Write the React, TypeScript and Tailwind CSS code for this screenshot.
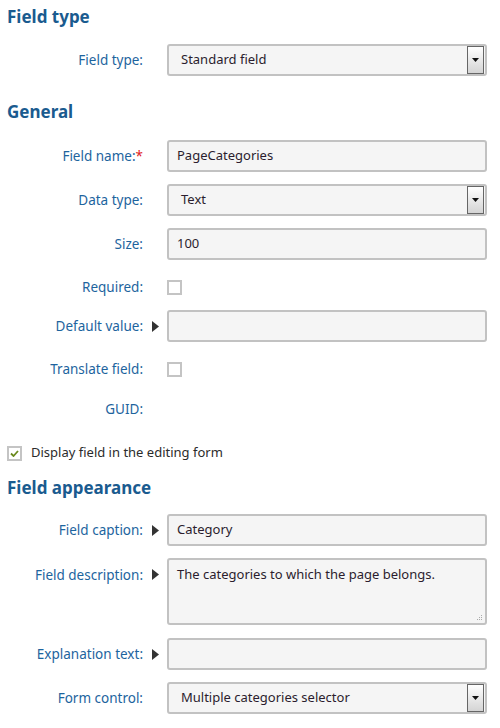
import React from 'react';

const font = { fontFamily: '"Segoe UI", "Noto Sans", "Open Sans", sans-serif' };

const Arrow = () => (
  <svg width="7" height="11" viewBox="0 0 7 11" className="block">
    <path d="M0 0 L7 5.5 L0 11 Z" fill="#333" />
  </svg>
);

const Row: React.FC<{
  label: React.ReactNode;
  arrow?: boolean;
  top?: boolean;
  className?: string;
  children?: React.ReactNode;
}> = ({ label, arrow, top, className = '', children }) => (
  <div className={`flex ${top ? 'items-start' : 'items-center'} ${className}`}>
    <div className={`w-[136px] shrink-0 text-right text-[13.5px] text-[#1d649e] ${top ? 'pt-[7px]' : ''}`}>{label}</div>
    <div className={`w-[24px] shrink-0 flex justify-center ${top ? 'pt-[11px]' : ''}`}>{arrow && <Arrow />}</div>
    <div className="flex-1 pr-[13px]">{children}</div>
  </div>
);

const TextBox: React.FC<{ value?: string }> = ({ value }) => (
  <div className="h-[32px] rounded-[3px] border-2 border-[#c2c2c2] bg-[#f5f5f5] pl-[8px] flex items-center text-[13px] text-[#2b1d2e]">
    {value}
  </div>
);

const Select: React.FC<{ value: string }> = ({ value }) => (
  <div className="h-[32px] rounded-[3px] border-2 border-[#c2c2c2] bg-[#f5f5f5] pl-[12px] pr-[1px] flex items-center justify-between text-[13px] text-[#2b1d2e]">
    <span>{value}</span>
    <div className="h-[28px] w-[17px] border border-[#666] bg-gradient-to-b from-white to-[#d4d4d4] flex items-center justify-center">
      <svg width="7" height="4" viewBox="0 0 7 4">
        <path d="M0 0 L7 0 L3.5 4 Z" fill="#111" />
      </svg>
    </div>
  </div>
);

const Check: React.FC<{ checked?: boolean }> = ({ checked }) => (
  <div className="w-[15px] h-[15px] border-2 border-[#c4c4c4] bg-white flex items-center justify-center">
    {checked && (
      <svg width="9" height="7" viewBox="0 0 9 7">
        <path d="M1 3.5 L3.5 6 L8 1" stroke="#6b8a1e" strokeWidth="1.8" fill="none" />
      </svg>
    )}
  </div>
);

const Heading: React.FC<{ children: React.ReactNode; className?: string }> = ({ children, className = '' }) => (
  <h2 className={`text-[17px] leading-[20px] font-bold text-[#1a5b8f] ${className}`}>{children}</h2>
);

export default function App() {
  return (
    <div className="w-[500px] h-[728px] bg-white pl-[7px] overflow-hidden" style={font}>
      <Heading className="pt-[7px]">Field type</Heading>
      <Row label="Field type:" className="mt-[17px]">
        <Select value="Standard field" />
      </Row>

      <Heading className="mt-[26px]">General</Heading>
      <Row label={<>Field name:<span className="text-[#e02020]">*</span></>} className="mt-[18px]">
        <TextBox value="PageCategories" />
      </Row>
      <Row label="Data type:" className="mt-[12px]">
        <Select value="Text" />
      </Row>
      <Row label="Size:" className="mt-[12px]">
        <TextBox value="100" />
      </Row>
      <Row label="Required:" className="mt-[14px] h-[26px]">
        <Check />
      </Row>
      <Row label="Default value:" arrow className="mt-[10px]">
        <TextBox />
      </Row>
      <Row label="Translate field:" className="mt-[14px] h-[26px]">
        <Check />
      </Row>
      <Row label="GUID:" className="mt-[11px] h-[32px]" />

      <div className="mt-[16px] h-[24px] flex items-center gap-[9px] text-[13px] text-[#2b2b2b]">
        <Check checked />
        <span>Display field in the editing form</span>
      </div>

      <Heading className="mt-[13px]">Field appearance</Heading>
      <Row label="Field caption:" arrow className="mt-[16px]">
        <TextBox value="Category" />
      </Row>
      <Row label="Field description:" arrow top className="mt-[12px]">
        <div className="relative h-[67px] rounded-[3px] border-2 border-[#c2c2c2] bg-[#f5f5f5] pl-[8px] pt-[5px] text-[13px] text-[#2b1d2e]">
          The categories to which the page belongs.
          <svg width="6" height="6" viewBox="0 0 6 6" className="absolute right-[2px] bottom-[2px]">
            <rect x="4" y="0" width="1" height="1" fill="#aaa" />
            <rect x="2" y="2" width="1" height="1" fill="#aaa" />
            <rect x="4" y="2" width="1" height="1" fill="#aaa" />
            <rect x="0" y="4" width="1" height="1" fill="#aaa" />
            <rect x="2" y="4" width="1" height="1" fill="#aaa" />
            <rect x="4" y="4" width="1" height="1" fill="#aaa" />
          </svg>
        </div>
      </Row>
      <Row label="Explanation text:" arrow className="mt-[13px]">
        <TextBox />
      </Row>
      <Row label="Form control:" className="mt-[12px]">
        <Select value="Multiple categories selector" />
      </Row>
    </div>
  );
}
